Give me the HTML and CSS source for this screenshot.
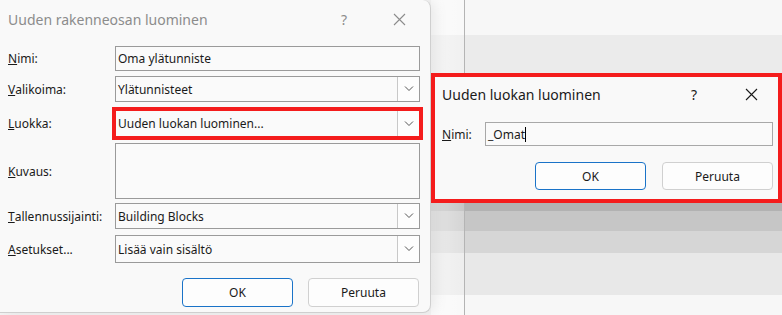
FILE: index.html
```html
<!DOCTYPE html>
<html lang="fi">
<head>
    <meta charset="UTF-8">
    <title>Uuden rakenneosan luominen</title>
    <link rel="stylesheet" href="styles.css">
</head>
<body>
    <div class="desktop">
        <!-- Main dialog (inactive) -->
        <div class="dialog main-dialog">
            <div class="titlebar inactive">
                <span class="title">Uuden rakenneosan luominen</span>
                <span class="help">?</span>
                <svg class="close" width="13" height="13" viewBox="0 0 13 13"><path d="M1 1 L12 12 M12 1 L1 12" stroke="currentColor" stroke-width="1.1" fill="none"/></svg>
            </div>

            <div class="form">
                <div class="row row-name">
                    <label><u>N</u>imi:</label>
                    <div class="field">Oma ylätunniste</div>
                </div>
                <div class="row row-gallery">
                    <label><u>V</u>alikoima:</label>
                    <div class="field combo">
                        <span>Ylätunnisteet</span>
                        <span class="drop"><svg width="10" height="6" viewBox="0 0 10 6"><path d="M1 0.5 L5 4.5 L9 0.5" stroke="#555" fill="none"/></svg></span>
                    </div>
                </div>
                <div class="row row-category">
                    <label><u>L</u>uokka:</label>
                    <div class="field combo highlight">
                        <span>Uuden luokan luominen...</span>
                        <span class="drop"><svg width="10" height="6" viewBox="0 0 10 6"><path d="M1 0.5 L5 4.5 L9 0.5" stroke="#555" fill="none"/></svg></span>
                    </div>
                </div>
                <div class="row row-desc">
                    <label><u>K</u>uvaus:</label>
                    <div class="field area"></div>
                </div>
                <div class="row row-save">
                    <label><u>T</u>allennussijainti:</label>
                    <div class="field combo">
                        <span>Building Blocks</span>
                        <span class="drop"><svg width="10" height="6" viewBox="0 0 10 6"><path d="M1 0.5 L5 4.5 L9 0.5" stroke="#555" fill="none"/></svg></span>
                    </div>
                </div>
                <div class="row row-options">
                    <label><u>A</u>setukset...</label>
                    <div class="field combo">
                        <span>Lisää vain sisältö</span>
                        <span class="drop"><svg width="10" height="6" viewBox="0 0 10 6"><path d="M1 0.5 L5 4.5 L9 0.5" stroke="#555" fill="none"/></svg></span>
                    </div>
                </div>
            </div>

            <div class="buttons">
                <button class="btn default">OK</button>
                <button class="btn">Peruuta</button>
            </div>
        </div>

        <!-- Window behind, shaded by the small dialog's shadow -->
        <div class="backdrop">
            <div class="band band-top"></div>
            <div class="band band-halo"></div>
            <div class="band band-under"></div>
            <div class="band band-s1"></div>
            <div class="band band-s2"></div>
            <div class="band band-s3"></div>
            <div class="band band-s4"></div>
            <div class="band band-rest"></div>
        </div>

        <!-- New category dialog (active) -->
        <div class="dialog sub-dialog">
            <div class="titlebar">
                <span class="title">Uuden luokan luominen</span>
                <span class="help">?</span>
                <svg class="close" width="13" height="13" viewBox="0 0 13 13"><path d="M1 1 L12 12 M12 1 L1 12" stroke="currentColor" stroke-width="1.1" fill="none"/></svg>
            </div>
            <div class="sub-row">
                <label><u>N</u>imi:</label>
                <div class="field">_Omat<span class="caret"></span></div>
            </div>
            <div class="buttons">
                <button class="btn default">OK</button>
                <button class="btn">Peruuta</button>
            </div>
        </div>
    </div>
</body>
</html>
```

FILE: styles.css
```css
body {
    margin: 0;
    font-family: 'Segoe UI', 'Noto Sans', sans-serif;
    font-size: 12px;
    color: #1a1a1a;
    background-color: #f4f4f4;
}

.desktop {
    position: relative;
    display: flex;
    width: 782px;
    height: 315px;
    overflow: hidden;
}

.dialog {
    background-color: #f9f9f9;
    box-sizing: border-box;
}

.main-dialog {
    position: relative;
    z-index: 1;
    width: 431px;
    height: 313px;
    flex-shrink: 0;
    border-right: 1px solid #cfcfcf;
    border-bottom: 1px solid #cfcfcf;
    border-radius: 0 8px 8px 0;
    box-shadow: 4px 0 14px rgba(0, 0, 0, 0.08);
}

.titlebar {
    display: flex;
    align-items: center;
    height: 38px;
    padding-left: 8px;
}

.titlebar .title {
    font-size: 14px;
    flex: 1;
}

.titlebar.inactive {
    color: #8c8c8c;
}

.titlebar .help {
    font-size: 14px;
    width: 52px;
}

.titlebar .close {
    margin-right: 24px;
}

/* Form rows */
.form {
    padding-top: 8px;
    padding-left: 8px;
}

.row {
    display: flex;
    align-items: flex-start;
}

.row label {
    width: 107px;
    display: flex;
    align-items: center;
}

.field {
    width: 305px;
    box-sizing: border-box;
    border: 1px solid #9a9a9a;
    background-color: #fafafa;
    padding-left: 2px;
    display: flex;
    align-items: center;
}

.combo span:first-child {
    flex: 1;
}

.combo .drop {
    width: 21px;
    align-self: stretch;
    display: flex;
    align-items: center;
    justify-content: center;
    border-left: 1px solid #c8c8c8;
    background-color: #fdfdfd;
}

.row-name { height: 30px; }
.row-name label, .row-name .field { height: 25px; }

.row-gallery { height: 32px; }
.row-gallery label, .row-gallery .field { height: 26px; }

.row-category { height: 33px; padding-top: 2px; }
.row-category label, .row-category .field { height: 27px; }

.row-desc { height: 60px; }
.row-desc label, .row-desc .field { height: 56px; }

.row-save { height: 32px; }
.row-save label, .row-save .field { height: 26px; }

.row-options { height: 28px; }
.row-options label, .row-options .field { height: 28px; }

.highlight {
    outline: 4px solid #f41c1c;
    outline-offset: -1px;
}

/* Buttons */
.buttons {
    display: flex;
    justify-content: flex-end;
    gap: 15px;
    padding-right: 11px;
    margin-top: 15px;
}

.btn {
    width: 111px;
    height: 29px;
    font-family: inherit;
    font-size: 12px;
    color: #1a1a1a;
    background-color: #fdfdfd;
    border: 1px solid #d0d0d0;
    border-radius: 4px;
}

.btn.default {
    border-color: #1a73c8;
}

/* Background window with the shadow bands */
.backdrop {
    flex: 1;
    display: flex;
    flex-direction: column;
}

.band {
    flex-shrink: 0;
    background-image:
        linear-gradient(to right, transparent 33px, #b4b4b4 33px, #b4b4b4 34px, transparent 34px),
        linear-gradient(to right, rgba(255, 255, 255, 0.55), rgba(255, 255, 255, 0.25) 33px, transparent 33px);
}

.band-top { height: 35px; background-color: #f7f7f7; }
.band-halo { height: 38px; background-color: #ebebeb; }
.band-under { height: 130px; background-color: #c8c8c8; }
.band-s1 { height: 8px; background-color: #b2b2b2; }
.band-s2 { height: 20px; background-color: #c6c6c6; }
.band-s3 { height: 22px; background-color: #d6d6d6; }
.band-s4 { height: 42px; background-color: #e8e8e8; }
.band-rest { flex: 1; background-color: #f7f7f7; }

/* Sub dialog floats over the desktop */
.sub-dialog {
    position: absolute;
    z-index: 2;
    left: 431px;
    top: 73px;
    width: 351px;
    height: 130px;
    border: 4px solid #f41c1c;
}

.sub-dialog .titlebar {
    height: 32px;
    padding-left: 7px;
    margin-top: 1px;
}

.sub-dialog .titlebar .help {
    width: 54px;
}

.sub-dialog .titlebar .close {
    margin-right: 20px;
}

.sub-row {
    display: flex;
    align-items: center;
    padding-left: 7px;
    margin-top: 12px;
}

.sub-row label {
    width: 43px;
}

.sub-row .field {
    width: 288px;
    height: 24px;
    border-color: #a8a8a8;
}

.caret {
    display: inline-block;
    width: 1px;
    height: 15px;
    background-color: #000;
}

.sub-dialog .buttons {
    margin-top: 16px;
    padding-right: 5px;
    gap: 16px;
}

.sub-dialog .btn {
    height: 28px;
}
```
